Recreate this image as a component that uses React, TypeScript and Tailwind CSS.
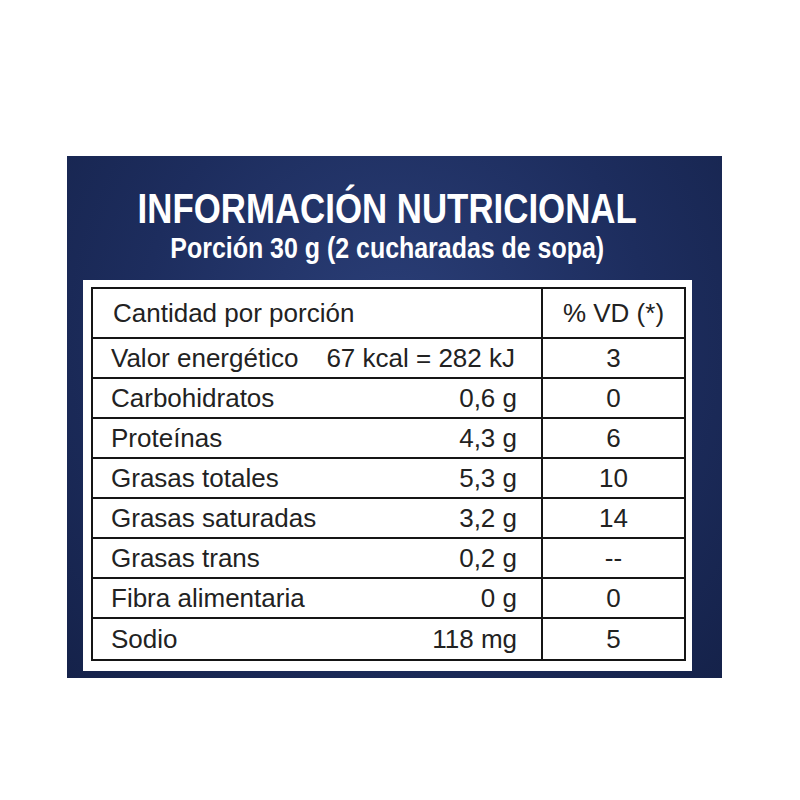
import React from "react";

const rows: { label: string; value: string; vd: string }[] = [
  { label: "Carbohidratos", value: "0,6 g", vd: "0" },
  { label: "Proteínas", value: "4,3 g", vd: "6" },
  { label: "Grasas totales", value: "5,3 g", vd: "10" },
  { label: "Grasas saturadas", value: "3,2 g", vd: "14" },
  { label: "Grasas trans", value: "0,2 g", vd: "--" },
  { label: "Fibra alimentaria", value: "0 g", vd: "0" },
  { label: "Sodio", value: "118 mg", vd: "5" },
];

export default function App() {
  return (
    <div className="w-[800px] h-[800px] bg-white pt-[156px] pl-[67px] [font-family:'Liberation_Sans',Arial,sans-serif]">
      <div className="w-[655px] h-[522px] bg-[radial-gradient(ellipse_at_50%_35%,#2b3f78_0%,#1d2d5e_55%,#15224a_100%)] flex flex-col">
        <div className="h-[124px] flex flex-col items-center pt-[34px] pr-[14px] text-white">
          <div className="inline-block whitespace-nowrap text-[43px] font-bold leading-[36px] scale-x-[0.81]">INFORMACIÓN NUTRICIONAL</div>
          <div className="inline-block whitespace-nowrap text-[29px] font-bold leading-[30px] mt-[7px] scale-x-[0.86]">Porción 30 g (2 cucharadas de sopa)</div>
        </div>
        <div className="ml-[16px] mr-[30px] h-[391px] bg-white pt-[7px] pl-[8px] pr-[6px] pb-[8px]">
          <div className="border-2 border-[#151515] text-[#222222] text-[26px]">
            <div className="flex h-[50px] border-b-2 border-[#151515]">
              <div className="w-[450px] border-r-2 border-[#151515] flex items-center pl-[20px]">Cantidad por porción</div>
              <div className="flex-1 flex items-center justify-center">% VD (*)</div>
            </div>
            <div className="flex h-[40px] border-b-2 border-[#151515]">
              <div className="w-[450px] border-r-2 border-[#151515] flex items-center justify-between pl-[18px] pr-[26px]">
                <span>Valor energético</span>
                <span>67 kcal = 282 kJ</span>
              </div>
              <div className="flex-1 flex items-center justify-center">3</div>
            </div>
            {rows.map((r, i) => (
              <div
                key={r.label}
                className={`flex h-[40px] ${i < rows.length - 1 ? "border-b-2 border-[#151515]" : ""}`}
              >
                <div className="w-[450px] border-r-2 border-[#151515] flex items-center justify-between pl-[18px] pr-[24px]">
                  <span>{r.label}</span>
                  <span>{r.value}</span>
                </div>
                <div className="flex-1 flex items-center justify-center">{r.vd}</div>
              </div>
            ))}
          </div>
        </div>
      </div>
    </div>
  );
}
